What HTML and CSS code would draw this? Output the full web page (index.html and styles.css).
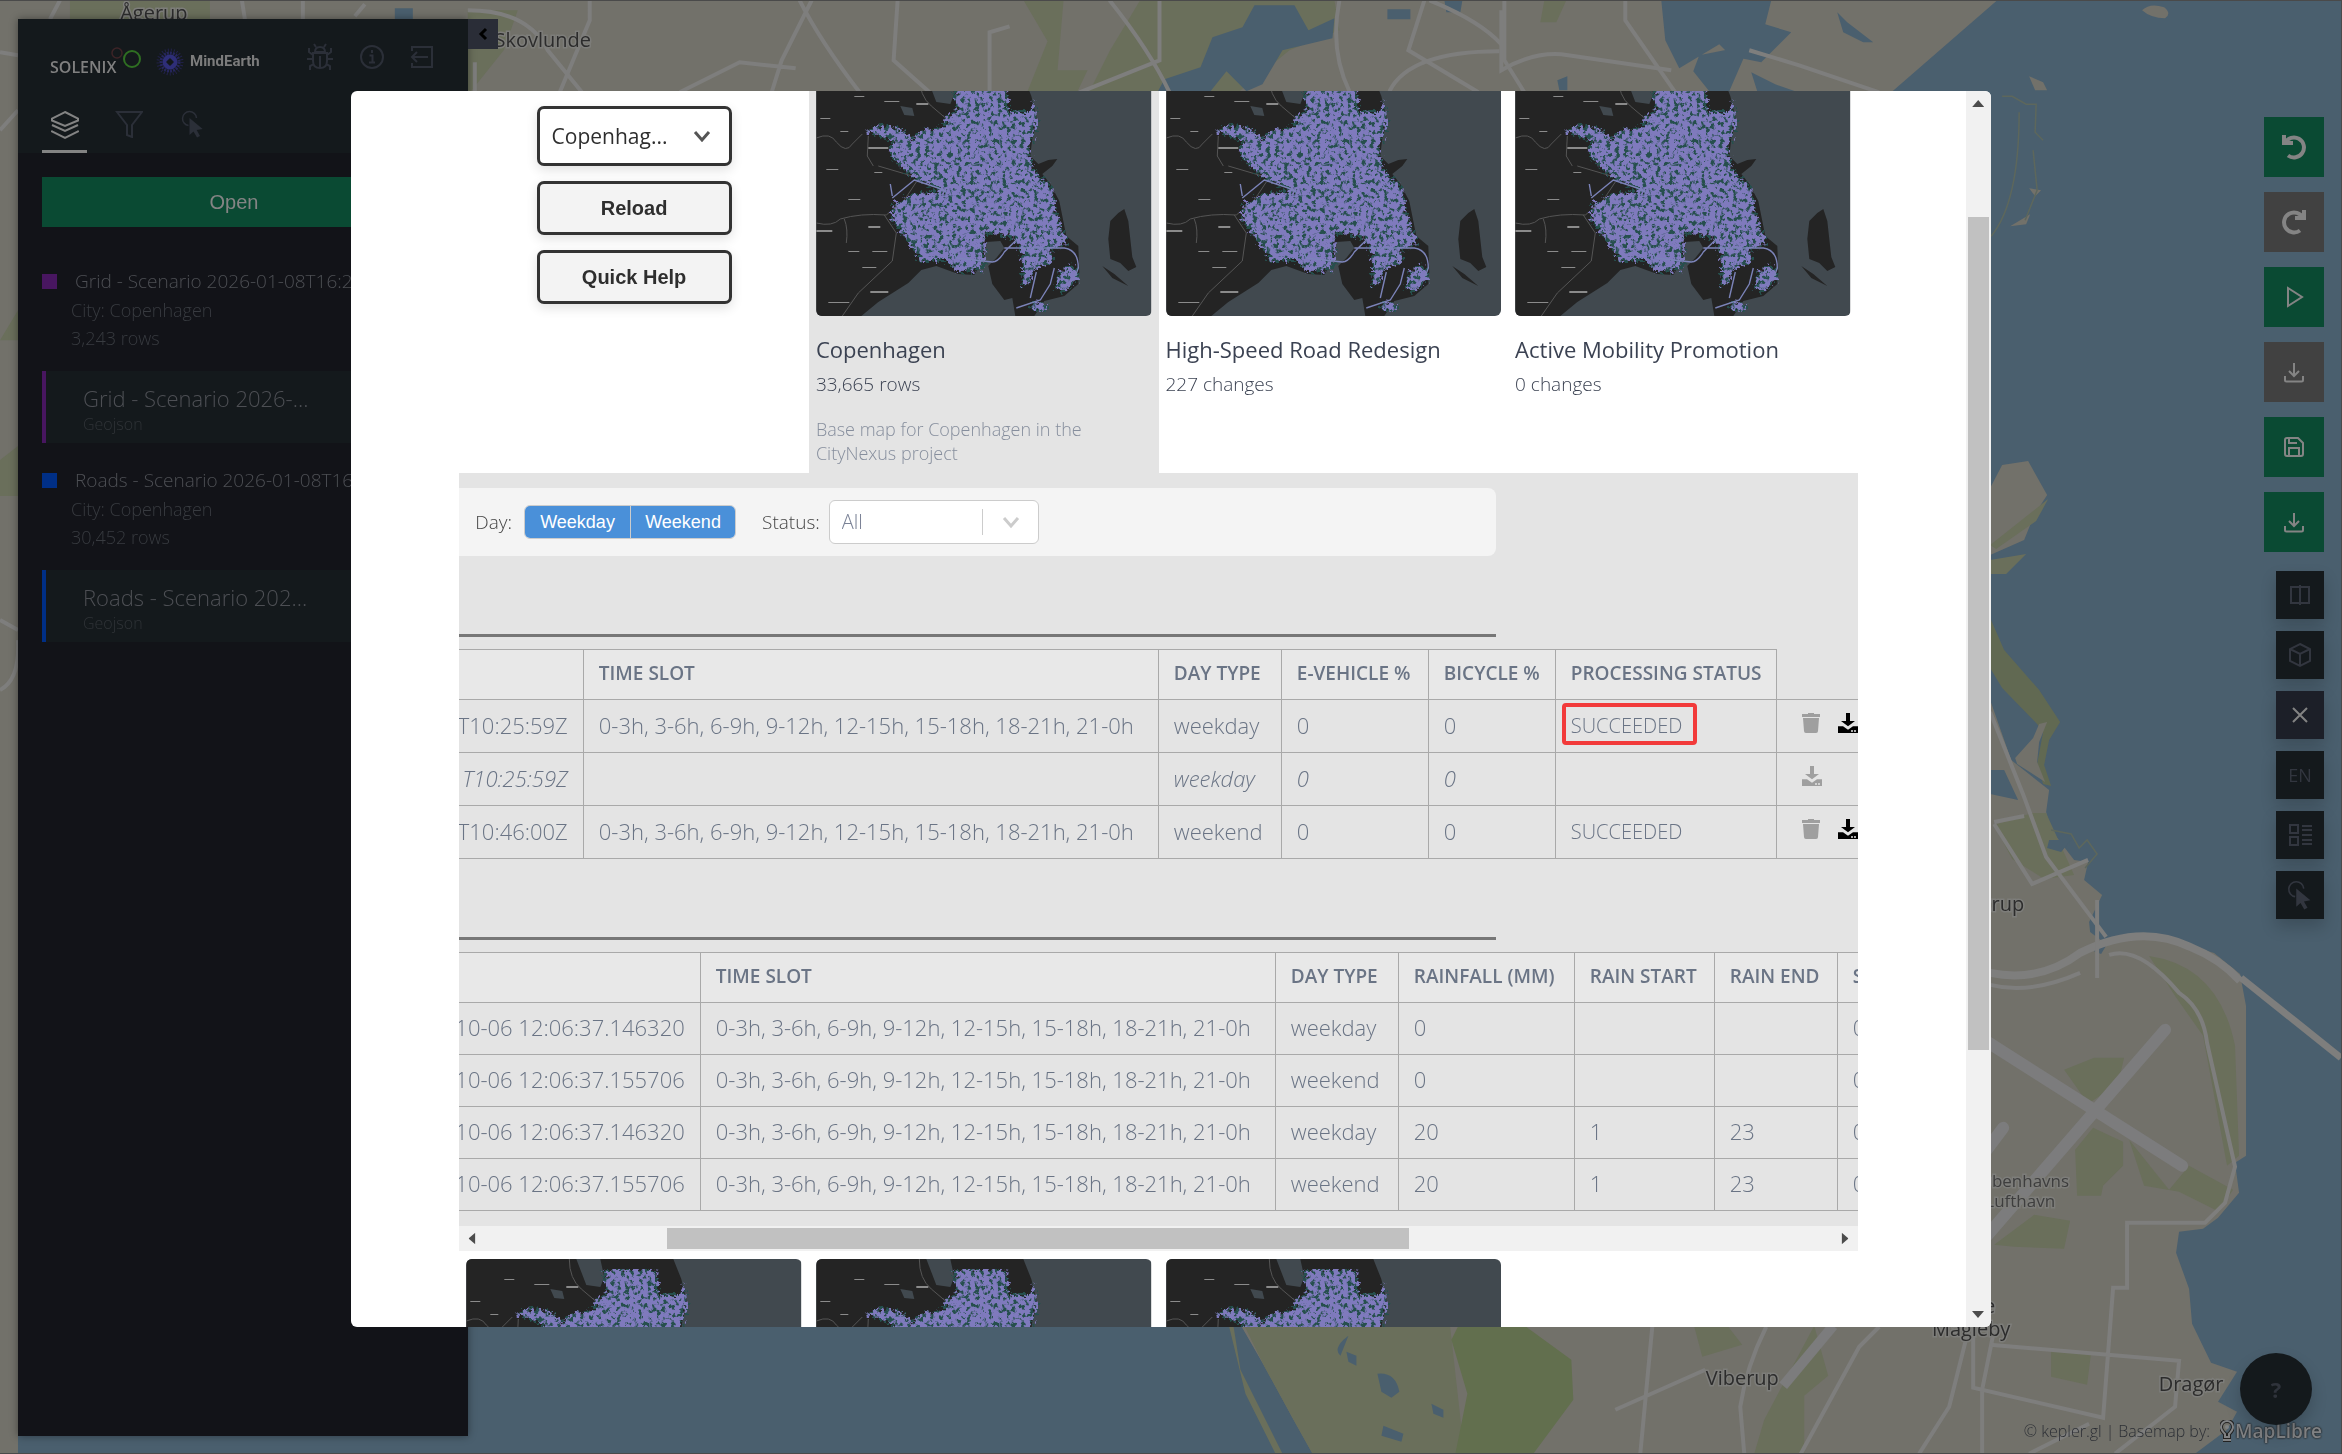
FILE: index.html
```html
<!DOCTYPE html>
<html lang="en">
<head>
<meta charset="utf-8">
<title>CityNexus</title>
<link rel="stylesheet" href="styles.css">
</head>
<body>
<svg class="defs" width="0" height="0" aria-hidden="true">
  <defs>
    <filter id="streets" x="0" y="0" width="1" height="1">
      <feTurbulence type="fractalNoise" baseFrequency="0.22" numOctaves="4" seed="4" result="n"/>
      <feColorMatrix in="n" type="matrix" values="0 0 0 0 0  0 0 0 0 0  0 0 0 0 0  0 0 0 7 -2.4" result="m"/>
      <feDisplacementMap in="SourceGraphic" in2="n" scale="14" xChannelSelector="R" yChannelSelector="G" result="d"/>
      <feComposite in="d" in2="m" operator="in"/>
    </filter>
    <filter id="rough" x="0" y="0" width="1" height="1">
      <feTurbulence type="fractalNoise" baseFrequency="0.3" numOctaves="2" seed="4" result="n"/>
      <feDisplacementMap in="SourceGraphic" in2="n" scale="16" xChannelSelector="R" yChannelSelector="G"/>
    </filter>
    <path id="town" d="M137 10H190L191 36 214 36 217 25 221 49 212 72 217 95 236 112 239 135 251 169 234 172 236 185 217 194 212 209 206 209 207 185 204 172 197 162 169 155 167 194 141 195 132 185 104 185 91 164 76 145 77 129 97 119 127 115 117 109 97 102 84 90 74 79 76 65 49 54 66 49 87 54 94 64 107 54 127 52 131 40 141 37z"/>
    <symbol id="city" viewBox="0 0 335 240">
      <rect width="335" height="240" fill="#41494f"/>
      <path fill="#242424" d="M0 0H207L215 20 221 45 216 62 214 80 222 88 232 84 241 83 236 90 226 98 234 108 243 125 246 140 250 160 262 170 263 195 262 208 248 220 228 225 218 240H199L196 222 188 224 176 208 172 190 180 182 188 172 184 165 170 166 168 182 158 199 142 198 120 190 105 194 92 207 62 226 45 240H0Z"/>
      <path fill="#242424" d="M308 133l4 12 4 36 4 10-8 4-8-8-10-4-2-20 2-18 8-8zM286 190l12 8 14 12-16-8z"/>
      <path fill="#41494f" d="M110 0h24l4 18-4 10-14-2zM84 30l12 2 2 8-10-1z"/>
      <g fill="none" stroke="#555" stroke-width="1">
        <path d="M103 0q0 20 12 30l26 22M0 62q14-6 20 4 10 12 16 2l10-10M52 60l-1 20 6 10M0 147q16 4 24-4 20-6 46-4l18-15 12-18M68 139l12 18-4 28-34 32-16 23M28 143q4 10 2 24M62 90l34 10"/>
      </g>
      <g fill="#27504d" filter="url(#rough)">
        <use href="#town"/>
        <path d="M245 194l14-4 4 14-16 12-8-4zM216 226l16 2-4 8-14-2z"/>
      </g>
      <g fill="#7f7abd" filter="url(#streets)">
        <use href="#town"/>
        <path d="M245 194l14-4 4 14-16 12-8-4zM220 226l12 2-4 8-12-2z"/>
      </g>
      <g fill="none" stroke="#7b79b8" stroke-width="1" opacity=".8">
        <path d="M140 60l12 50 20 20M160 40l24 60 30 14M150 90l50-10M130 130l50-4 30 10M146 150l24-60 8-50M180 20l6 80-10 40M200 50l-24 60-16 40M136 66l60 30M214 132l10 30M100 140l40 10"/>
      </g>
      <g fill="none" stroke="#7b83b8" stroke-width="1.400">
        <path d="M76 122l22-18 24 8 8 4M128 158l12 24 36 4q6 0 12-10l12-12M188 172h60q14 2 14 20l-3 8M200 232l24-8 10-16 4-16M214 222l6-26M74 108l2 12"/>
      </g>
      <g fill="#8b8b8b">
        <path d="M100 27h12v2h-12zM68 25h15v1h-15zM52 71h20v2h-20zM52 150h12v2h-12zM0 154h16v2h-16zM54 215h18v2h-18zM32 123h12v1h-12zM10 93h12v1h-12zM46 191h14v1h-14zM32 175h11v1h-11zM56 175h15v1h-15zM12 226h21v1h-21zM4 42h10v1h-10zM58 96h8v1h-8zM24 55h8v1h-8zM38 20h10v1h-10z"/>
      </g>
    </symbol>
    <symbol id="chevron" viewBox="0 0 20 20"><path d="M3 6l7 8 7-8" fill="none" stroke="currentColor" stroke-width="3"/></symbol>
    <symbol id="tray" viewBox="0 0 24 24"><path d="M3 16v4q0 1.500 1.500 1.500h15q1.500 0 1.500-1.500v-4M12 3v13M7 11l5 5 5-5" fill="none" stroke="currentColor" stroke-width="2"/></symbol>
    <symbol id="pointer" viewBox="0 0 24 28"><path d="M7.500 15.500A7 7 0 1 1 15.500 8" fill="none" stroke="currentColor" stroke-width="1.500"/><path d="M8.500 8v17l4-3.500 3.500 6 3-1.600-3.300-5.900 6-1z" fill="currentColor"/></symbol>
    <symbol id="drive" viewBox="0 0 20 30"><path d="M8 0h4v12h5l-7 8-7-8h5z" fill="currentColor"/><path d="M0 20h5l5 5 5-5h5v10H0z" fill="currentColor"/><path d="M13 26h2v2h-2zM16 26h2v2h-2z" fill="#e4e4e4"/></symbol>
    <symbol id="trash" viewBox="0 0 18 20"><path d="M6 0h6v1h6v3H0V1h6zM1 5h16l-1 13q0 2-2 2H4q-2 0-2-2z" fill="#9f9f9f"/></symbol>
  </defs>
</svg>

<svg class="basemap" viewBox="0 0 2342 1454" preserveAspectRatio="xMidYMid slice" aria-label="Base map">
  <rect width="2342" height="1454" fill="#4a5f6e"/>
  <path fill="#72716a" d="M0 0H1998L1891 93 1991 488 2003 465 2029 461 2048 495 2035 515 2025 540 1991 555V700L2012 760 2050 790 2047 812 2052 830 2075 860 2089 862 2085 880 2103 895 2090 922 2091 932 2107 944 2145 938 2177 941 2215 953 2241 974 2247 1006V1156L2236 1163 2240 1193 2219 1218 2204 1229 2180 1232 2177 1253 2190 1289 2193 1324 2212 1363 2238 1372 2219 1402 2238 1412 2228 1430 2196 1454H1313L1294 1420 1265 1367 1242 1327V1200H0Z"/>
  <path fill="#4a5f6e" d="M469 1100H1242V1327L1265 1367 1294 1420 1313 1454H0V1440H469Z"/>
  <path fill="#72716a" d="M0 0H18V1454H0z"/>
  <path fill="#6a6f5b" d="M1233 1320l8 50 42 84-7 0-30-60-18-74zM1242 1320H1450L1465 1454H1313L1294 1420 1265 1367z"/>
  <path fill="#626f4e" d="M1452 1340l10-20h55l55 40 2 40-40 54H1456l12-60z"/>
  <path fill="#6a6f5b" d="M1765 1420l50-94 14 50-24 20 0 58h-50zM1695 1327h34l14 18-40 12zM2052 1349l40 4-4 32-36-8zM1995 1245l40-30 36 6-6 28-50-2zM2150 956q70 10 86 90l4 110-12 10-24-130-28-40zM2065 1070l30-12 30 0-6 26-30 20zM2076 1150l18-22 30 14 0 24-20 20-2 10h-24zM2130 1140l40 50 20-24 44 24-14 22-40-20-35-6z"/>
  <path fill="#6a6f5b" d="M1995 825l38-12 14 0 28 62-30 4-32-20zM1991 545l58-46-12 22-40 28zM1991 560l36-6-20 20-16 0zM70 0h132l-30 19H70zM468 50h34l-40 45h-30zM190 0h20v19h-30zM0 460l18-14v50H0zM0 340l18-30v30z"/>
  <path fill="#6a6f5b" d="M468 10l50 0-14 40-36 45zM1024 0h40l-6 70 30 0-10 21h-50l20-50zM1160 0h175l5 30-50 20-50 41h-150l20-40 30-50zM1545 0h22l-10 22h-16z"/>
  <g fill="#4a5f6e">
    <path d="M1255 5h40l14 25 26-12-2 20-50 12-20 34-16 7-20-20-24 30-50 0 12-22 36-12 12-30 30-10zM1445 0h18l-2 12h-14zM1662 0h110l-6 24 26 8-30 30-30-6-12-12-40 24-14-28zM1700 55l50-10-20 46h-20l-16-20zM1838 12l10 10 26 20-10 0-20-10zM1752 72l24 12 20 7h-38zM1558 80l10-4v14h-8z"/>
    <path d="M1388 9h23v10h-23zM1344 1340q-10 10-3 16l8-20zM1347 1352l10 4v10l-8-4zM1378 1374q18-2 22 18l-8 6-10-6zM1432 1404l12 6v8l-10-4zM1384 1426l20 8-2 8-20-6z"/>
    <path d="M1991 770l14 0 14 30-28-6zM2050 840l22 0-10 12-14-4zM2098 942l10 2-6 10-10-4zM395 8h18v11h-18z"/>
  </g>
  <path fill="#72703f" opacity=".6" d="M1991 618l14 32 35 40 21 32-11 18-5 25 7 21-8-2-6-20 6-32-6-8-35-36-12-20-12-20z"/>
  <path fill="#72716a" d="M2143 10q8-8 22-3 8 6 1 11-14 0-23-8zM2030 76l14 6 4 8-12 0zM2030 188l12 2-6 6zM2011 226l20-12-4 10zM2040 724l8-2-8 20-2 20 8 20-28-18-2-6 18-20z"/>
  <g fill="none" stroke="#5d675c" stroke-width="1.500"><path d="M2003 96h10l14 8h10l-1 28 8 8M2020 112q0 90-28 124M2034 150l4 40-12 30M2052 830l20 4 8 14 8-8 10 14-12 14"/></g>
  <g fill="none" stroke="#7e7e7d" stroke-width="4">
    <path d="M60 0l-10 19M242 0l3 19M303 0v19M365 4l-10 12M0 52l18 3M0 130l18-20M468 10q60 0 80 40l44 54M590 0v20l-30 72M800 0q20 40 60 92M812 0l-30 60-10 32M898 0l-4 60 36 32M1110 0q40 50 60 92M1160 0v60l-80 32M1340 0q-10 50 10 91M1425 0l-16 50 70 42M1505 0v60l20 32M1626 0v20l50 72M680 92l60-30 56 6M990 92v-60l20-6M1390 91q20-40 110-40M1430 0q50 20 72 44"/>
    <path d="M1502 10v60q30-18 60-16l110 16M1750 50l50 15 80 27M475 92v-30M0 690q20-10 18-50M0 620l18 10M1991 712l34 85 22 60 60 80M1995 822l30-6M1995 824l38 60 56-24M2030 1454l60-30M1995 1330l-12 60 0 70"/>
    <path d="M1991 973q50 10 90-20 60-30 110-6 30 12 50 34" stroke-width="8"/>
    <path d="M1991 985q40 10 90-12M2098 900l0 78M2110 955q30-10 70 38 24 16 28 50l28 124-10 36-20 20h-78v65h-14l-10 130-130-30 0-80M1991 1345l189 16-4 46-60 47M1880 1327l-20 20-60 110M1616 1410l90-40M1653 1327l-12 127M1767 1327q-20 40-26 80l4 47M1970 1327l-20 80-30 47"/>
    <path d="M2242 978l100 80" stroke-width="7"/>
  </g>
  <g fill="none" stroke="#7c7c7d" stroke-width="12" stroke-linecap="round"><path d="M1985 1040l198 126M2166 1030l-180 208M2004 1128l-18 24"/></g>
  <path stroke="#7c7c7d" stroke-width="10" d="M1834 1326l-50 60"/>
  <g class="place">
    <text x="154" y="20" text-anchor="middle">Ågerup</text>
    <text x="543" y="47" text-anchor="middle">Skovlunde</text>
    <text x="2025" y="911" text-anchor="end">Kastrup</text>
    <text x="1996" y="1313" text-anchor="end">Store</text>
    <text x="1972" y="1336" text-anchor="middle">Magleby</text>
    <text x="1743" y="1385" text-anchor="middle">Viberup</text>
    <text x="2192" y="1391" text-anchor="middle">Dragør</text>
  </g>
  <g class="place small">
    <text x="2070" y="1187" text-anchor="end">Københavns</text>
    <text x="2056" y="1207" text-anchor="end">Lufthavn</text>
  </g>
</svg>

<footer class="attribution">
  <a href="#">© kepler.gl</a><span>|</span><span>Basemap by:</span>
  <a class="maplibre" href="#"><svg width="14" height="22" viewBox="0 0 14 22"><path d="M7 1a6 6 0 0 0-6 6q0 3 4 7v3h4v-3q4-4 4-7a6 6 0 0 0-6-6zM3 20h8" fill="none" stroke="#222" stroke-width="4"/><path d="M7 1a6 6 0 0 0-6 6q0 3 4 7v3h4v-3q4-4 4-7a6 6 0 0 0-6-6zM3 20h8" fill="none" stroke="currentColor" stroke-width="2"/><circle cx="7" cy="7" r="2" fill="currentColor"/></svg>MapLibre</a>
</footer>

<aside class="sidebar">
  <header class="side-head">
    <div class="brand">
      <svg class="solenix" width="94" height="40" viewBox="0 0 94 40"><text x="0" y="32">SOLENIX</text><circle cx="67" cy="12" r="5" fill="none" stroke="#3d2427" stroke-width="1.500"/><circle cx="82" cy="18" r="8" fill="none" stroke="#2f6f22" stroke-width="2"/></svg>
      <svg width="28" height="28" viewBox="0 0 28 28"><circle cx="14" cy="14" r="12" fill="none" stroke="#22224a" stroke-width="3" stroke-dasharray="1 2"/><circle cx="14" cy="14" r="9" fill="none" stroke="#26265c" stroke-width="3" stroke-dasharray="2 1"/><circle cx="14" cy="14" r="5" fill="none" stroke="#2e2e78" stroke-width="5"/><path d="M14 10l4 4-4 4-4-4z" fill="#14191c"/></svg>
      <span class="mind">MindEarth</span>
      <nav class="actions">
        <a href="#" aria-label="Report a bug"><svg width="28" height="28" viewBox="0 0 28 28" fill="none" stroke="currentColor" stroke-width="2"><path d="M9 9q0-5 5-5t5 5zM7 10h14v8q0 7-7 7t-7-7zM14 13v12M7 16H1M21 16h6M7 12L3 9V5M21 12l4-3V5M8 21l-4 2v4M20 21l4 2v4M10 4L8 1M18 4l2-3"/></svg></a>
        <a href="#" aria-label="About"><svg width="24" height="24" viewBox="0 0 24 24" fill="none" stroke="currentColor" stroke-width="2"><circle cx="12" cy="12" r="11"/><path d="M12 5v3M9.500 10.500H12.500V17M9 17.500h6"/></svg></a>
        <a href="#" aria-label="Log out"><svg width="24" height="24" viewBox="0 0 24 24" fill="none" stroke="currentColor" stroke-width="2"><path d="M2 6V2h20v20H2v-4M18 12H3M7 7l-5 5 5 5"/></svg></a>
      </nav>
    </div>
    <nav class="tabs">
      <a class="tab active" href="#" aria-label="Layers"><svg width="30" height="30" viewBox="0 0 30 30" fill="none" stroke="currentColor" stroke-width="2"><path d="M15 2l13 6.500v2L15 16 2 10.500v-2zM2 15l13 6 13-6M2 20.500v1L15 28l13-6.500v-1"/></svg></a>
      <a class="tab" href="#" aria-label="Filters"><svg width="28" height="28" viewBox="0 0 28 28" fill="none" stroke="currentColor" stroke-width="2"><path d="M2 2h25L17 15v12l-5-2V15z"/></svg></a>
      <a class="tab" href="#" aria-label="Interactions"><svg width="24" height="28"><use href="#pointer"/></svg></a>
    </nav>
  </header>
  <div class="side-body">
    <button class="open" type="button">Open</button>
    <section class="dataset">
      <h3><i class="swatch purple"></i>Grid - Scenario 2026-01-08T16:22</h3>
      <p>City: Copenhagen</p>
      <p>3,243 rows</p>
      <div class="layer purple-edge"><strong>Grid - Scenario 2026-...</strong><small>Geojson</small></div>
    </section>
    <section class="dataset">
      <h3><i class="swatch blue"></i>Roads - Scenario 2026-01-08T16:22</h3>
      <p>City: Copenhagen</p>
      <p>30,452 rows</p>
      <div class="layer blue-edge"><strong>Roads - Scenario 202...</strong><small>Geojson</small></div>
    </section>
  </div>
  <button class="collapse" type="button" aria-label="Collapse"><svg width="12" height="14" viewBox="0 0 12 14"><path d="M9 2L4 7l5 5" fill="none" stroke="#000" stroke-width="3"/></svg></button>
</aside>

<div class="tools">
  <button class="tool go" type="button" aria-label="Undo"><svg width="26" height="26" viewBox="0 0 26 26"><path d="M4 9A10 10 0 1 1 7 21.500" fill="none" stroke="currentColor" stroke-width="4"/><path d="M1 1h4v6h7v4H1z" fill="currentColor"/></svg></button>
  <button class="tool off" type="button" aria-label="Redo"><svg width="26" height="26" viewBox="0 0 26 26"><path d="M22 9A10 10 0 1 0 19 21.500" fill="none" stroke="currentColor" stroke-width="4"/><path d="M25 1h-4v6h-7v4h11z" fill="currentColor"/></svg></button>
  <button class="tool go" type="button" aria-label="Run"><svg width="24" height="24" viewBox="0 0 24 24"><path d="M6 3v18l14-9z" fill="none" stroke="currentColor" stroke-width="2"/></svg></button>
  <button class="tool off" type="button" aria-label="Import"><svg width="24" height="24"><use href="#tray"/></svg></button>
  <button class="tool go" type="button" aria-label="Save"><svg width="24" height="24" viewBox="0 0 24 24"><path d="M3 5q0-2 2-2h11l5 5v11q0 2-2 2H5q-2 0-2-2zM7 21v-8h10v8M7 3v5h8" fill="none" stroke="currentColor" stroke-width="2"/></svg></button>
  <button class="tool go" type="button" aria-label="Download"><svg width="24" height="24"><use href="#tray"/></svg></button>
  <div class="controls">
    <button class="ctl" type="button" aria-label="Split map"><svg width="22" height="22" viewBox="0 0 22 22"><path d="M2 3h18v16H2zM11 1v20" fill="none" stroke="currentColor" stroke-width="2"/></svg></button>
    <button class="ctl" type="button" aria-label="3D map"><svg width="24" height="26" viewBox="0 0 24 26"><path d="M12 2l10 5v12l-10 5-10-5V7zM2 7l10 5 10-5M12 12v12" fill="none" stroke="currentColor" stroke-width="2"/></svg></button>
    <button class="ctl lit" type="button" aria-label="Close"><svg width="18" height="18" viewBox="0 0 18 18"><path d="M2 2l14 14M16 2L2 16" fill="none" stroke="currentColor" stroke-width="2"/></svg></button>
    <button class="ctl" type="button">EN</button>
    <button class="ctl" type="button" aria-label="Legend"><svg width="24" height="24" viewBox="0 0 24 24"><path d="M2 2h8v8H2zM2 14h8v8H2zM14 3h10M14 7h10M14 12h10M14 17h10M14 21h10" fill="none" stroke="currentColor" stroke-width="2"/></svg></button>
    <button class="ctl" type="button" aria-label="Select"><svg width="26" height="30"><use href="#pointer"/></svg></button>
  </div>
</div>
<button class="help" type="button">?</button>

<main class="modal">
  <div class="modal-view">
    <div class="gallery">
      <form class="picker">
        <label class="city-select"><select aria-label="City"><option>Copenhag...</option></select><svg width="20" height="20"><use href="#chevron"/></svg></label>
        <button type="button">Reload</button>
        <button type="button">Quick Help</button>
      </form>
      <article class="card chosen">
        <svg class="thumb"><use href="#city"/></svg>
        <h2>Copenhagen</h2><p>33,665 rows</p>
        <p class="desc">Base map for Copenhagen in the CityNexus project</p>
      </article>
      <article class="card"><svg class="thumb"><use href="#city"/></svg><h2>High-Speed Road Redesign</h2><p>227 changes</p></article>
      <article class="card"><svg class="thumb"><use href="#city"/></svg><h2>Active Mobility Promotion</h2><p>0 changes</p></article>
    </div>

    <section class="results">
      <div class="results-view">
        <form class="filters">
          <span>Day:</span>
          <div class="days"><button type="button">Weekday</button><button type="button">Weekend</button></div>
          <label for="status">Status:</label>
          <div class="status"><select id="status"><option>All</option></select><svg width="20" height="20"><use href="#chevron"/></svg></div>
        </form>
        <hr>
        <table class="runs">
          <colgroup><col class="c-id"><col class="c-slot"><col class="c-day"><col class="c-ev"><col class="c-bike"><col class="c-stat"><col class="c-act"></colgroup>
          <thead><tr><th></th><th>TIME SLOT</th><th>DAY TYPE</th><th>E-VEHICLE %</th><th>BICYCLE %</th><th>PROCESSING STATUS</th><td class="blank"></td></tr></thead>
          <tbody>
            <tr><td><div class="stamp">T10:25:59Z</div></td><td>0-3h, 3-6h, 6-9h, 9-12h, 12-15h, 15-18h, 18-21h, 21-0h</td><td>weekday</td><td>0</td><td>0</td><td class="state marked">SUCCEEDED</td><td><div class="acts"><svg width="18" height="20"><use href="#trash"/></svg><svg class="strong" width="20" height="20" viewBox="0 0 20 30" preserveAspectRatio="none"><use href="#drive" width="20" height="30"/></svg></div></td></tr>
            <tr class="derived"><td><div class="stamp">T10:25:59Z</div></td><td></td><td>weekday</td><td>0</td><td>0</td><td></td><td><div class="acts"><svg width="20" height="20" viewBox="0 0 20 30" preserveAspectRatio="none"><use href="#drive" width="20" height="30"/></svg></div></td></tr>
            <tr><td><div class="stamp">T10:46:00Z</div></td><td>0-3h, 3-6h, 6-9h, 9-12h, 12-15h, 15-18h, 18-21h, 21-0h</td><td>weekend</td><td>0</td><td>0</td><td class="state">SUCCEEDED</td><td><div class="acts"><svg width="18" height="20"><use href="#trash"/></svg><svg class="strong" width="20" height="20" viewBox="0 0 20 30" preserveAspectRatio="none"><use href="#drive" width="20" height="30"/></svg></div></td></tr>
          </tbody>
        </table>
        <hr>
        <table class="rain">
          <colgroup><col class="c-rid"><col class="c-slot"><col class="c-day"><col class="c-mm"><col class="c-start"><col class="c-end"><col class="c-act"></colgroup>
          <thead><tr><th></th><th>TIME SLOT</th><th>DAY TYPE</th><th>RAINFALL (MM)</th><th>RAIN START</th><th>RAIN END</th><th>S</th></tr></thead>
          <tbody>
            <tr><td><div class="stamp">10-06 12:06:37.146320</div></td><td>0-3h, 3-6h, 6-9h, 9-12h, 12-15h, 15-18h, 18-21h, 21-0h</td><td>weekday</td><td>0</td><td></td><td></td><td>0</td></tr>
            <tr><td><div class="stamp">10-06 12:06:37.155706</div></td><td>0-3h, 3-6h, 6-9h, 9-12h, 12-15h, 15-18h, 18-21h, 21-0h</td><td>weekend</td><td>0</td><td></td><td></td><td>0</td></tr>
            <tr><td><div class="stamp">10-06 12:06:37.146320</div></td><td>0-3h, 3-6h, 6-9h, 9-12h, 12-15h, 15-18h, 18-21h, 21-0h</td><td>weekday</td><td>20</td><td>1</td><td>23</td><td>0</td></tr>
            <tr><td><div class="stamp">10-06 12:06:37.155706</div></td><td>0-3h, 3-6h, 6-9h, 9-12h, 12-15h, 15-18h, 18-21h, 21-0h</td><td>weekend</td><td>20</td><td>1</td><td>23</td><td>0</td></tr>
          </tbody>
        </table>
      </div>
      <div class="hbar"><i class="arrow left"></i><div class="track"><b class="thumb-bar"></b></div><i class="arrow right"></i></div>
    </section>

    <div class="gallery lower">
      <article class="card"><svg class="thumb"><use href="#city"/></svg></article>
      <article class="card"><svg class="thumb"><use href="#city"/></svg></article>
      <article class="card"><svg class="thumb"><use href="#city"/></svg></article>
    </div>
  </div>
  <div class="vbar"><i class="arrow up"></i><div class="track"><b class="thumb-bar"></b></div><i class="arrow down"></i></div>
</main>
</body>
</html>
```
FILE: styles.css
```css
* { box-sizing: border-box; }
html, body { height: 100%; }
body {
  margin: 0;
  overflow: hidden;
  background: #4a5f6e;
  color: #3b4252;
  font-family: "Open Sans", "Noto Sans", sans-serif;
  font-weight: 300;
}
h2, h3, p { margin: 0; font-weight: inherit; }
a { color: inherit; text-decoration: none; }
button, select { font-family: "Liberation Sans", Arial, sans-serif; border: 0; padding: 0; margin: 0; }
svg { display: block; flex: none; }
.defs { position: absolute; }

/* Map behind everything */
.basemap { position: fixed; inset: 0; width: 100%; height: 100%; border: solid #4a4a4a; border-width: 1px 1px 1px 0; }
.place { font-size: 20px; font-weight: 400; fill: #2c2c2c; stroke: #7d7d7a; stroke-width: 3px; paint-order: stroke; }
.place.small { font-size: 17px; fill: #3e3e3e; }
.attribution {
  position: fixed; right: 20px; bottom: 11px;
  display: flex; align-items: center; gap: 4px;
  font-size: 16px; line-height: 24px; color: #2c2f35;
}
.maplibre { display: flex; align-items: center; gap: 1px; font-size: 19px; font-weight: 600; color: #808284; text-shadow: 0 0 2px #222, 0 0 2px #222; margin-left: 6px; }

/* Side panel */
.sidebar { position: fixed; left: 18px; top: 19px; bottom: 18px; width: 450px; background: #121318; box-shadow: 0 0 8px rgba(0, 0, 0, .4); }
.side-head { height: 134px; background: #14191c; padding: 24px 34px 0 32px; }
.brand { display: flex; align-items: center; height: 36px; }
.solenix text { font: 600 16px "Open Sans", sans-serif; fill: #808080; }
.brand > svg + svg { margin: 2px 6px 0 12px; }
.mind { font: 700 15px/20px Roboto, sans-serif; color: #7c7c7c; }
.actions { margin: -8px 0 0 auto; display: flex; align-items: center; gap: 26px; color: #2b2f38; height: 28px; }
.tabs { display: flex; gap: 19px; margin: 22px 0 0 -8px; color: #2b2f38; }
.tab { width: 45px; height: 52px; padding-top: 9px; display: flex; flex-direction: column; align-items: center; }
.tab.active { color: #838383; border-bottom: 3px solid #838383; }
.side-body { padding: 24px 24px 0; color: #383b40; }
.open { display: block; width: 100%; height: 50px; padding-right: 18px; background: #0a4a33; color: #848484; font-size: 20px; margin-bottom: 39px; }
.dataset { font-size: 18px; line-height: 28px; margin-bottom: 22px; }
.dataset h3 { display: flex; align-items: center; gap: 18px; height: 30px; font-size: 19px; color: #4d4f54; white-space: nowrap; overflow: hidden; }
.dataset p { padding-left: 29px; }
.swatch { width: 15px; height: 15px; }
.purple { background: #481660; }
.blue { background: #002f86; }
.layer { margin-top: 19px; height: 72px; padding: 12px 0 0 37px; border-left: 4px solid; background: #14191c; }
.layer.purple-edge { border-color: #481660; }
.layer.blue-edge { border-color: #002f86; }
.layer strong { display: block; font-weight: 300; font-size: 22px; line-height: 30px; color: #4d4f54; }
.layer small { display: block; font-size: 16px; line-height: 22px; color: #2f3337; }
.collapse { position: absolute; left: 100%; top: 0; width: 30px; height: 30px; background: #2a2d37; display: grid; place-items: center; }

/* Map tools */
.tools { position: fixed; top: 117px; right: 18px; display: flex; flex-direction: column; gap: 15px; align-items: flex-end; }
.tool { width: 60px; height: 60px; display: grid; place-items: center; color: #848484; }
.go { background: #0a4a33; }
.off { background: #414141; }
.controls { display: flex; flex-direction: column; gap: 12px; margin-top: 4px; }
.ctl { width: 48px; height: 48px; display: grid; place-items: center; background: #14191c; color: #32363f; font: 400 18px "Open Sans", sans-serif; box-shadow: 0 8px 16px rgba(0, 0, 0, .18); }
.ctl.lit { background: #1c1f28; color: #838383; }
.help { position: fixed; right: 30px; bottom: 29px; width: 72px; height: 72px; border-radius: 50%; background: #14191c; color: #2f333b; font: 700 22px "Open Sans", sans-serif; box-shadow: 0 8px 16px rgba(0, 0, 0, .18); }

/* Dialog */
.modal { position: fixed; left: 15%; right: 15%; top: 91px; bottom: 127px; display: flex; background: #fff; border-radius: 6px; overflow: hidden; }
.modal-view { flex: 1; min-width: 0; padding: 0 108px; overflow: hidden; }
.gallery { display: grid; grid-template-columns: repeat(4, 1fr); margin-top: -23px; }
.gallery.lower { margin-top: 0; }
.card { padding: 8px 7px; }
.chosen { background: #e4e4e4; }
.thumb { width: 100%; height: 240px; border-radius: 6px; }
.card h2 { margin-top: 18px; font-size: 22px; line-height: 30px; font-weight: 400; }
.card p { margin-top: 7px; font-size: 19px; line-height: 26px; }
.card .desc { margin-top: 20px; font-size: 18px; line-height: 24px; color: #868e9d; }
.picker { padding-top: 38px; display: flex; flex-direction: column; align-items: center; gap: 15px; }
.picker button, .city-select { width: 195px; height: 54px; border: 3px solid #333; border-radius: 7px; background: #f3f3f3; color: #2e2e2e; box-shadow: 0 4px 12px rgba(0, 0, 0, .12); }
.picker button { font-size: 20px; font-weight: 700; }
.city-select { height: 60px; background: #fff; display: flex; align-items: center; padding: 0 17px 0 12px; color: #555; }
select { appearance: none; background: transparent; outline: 0; }
.city-select select { flex: 1; min-width: 0; font: 400 21px "Open Sans", sans-serif; color: #2e2e2e; }

/* Results panel */
.results { background: #e4e4e4; }
.results-view { overflow: hidden; padding: 15px 0 15px; }
.filters { width: calc(100% - 362px); height: 68px; display: flex; align-items: center; padding-left: 16px; background: #f4f4f4; border-radius: 0 8px 8px 0; font-size: 19px; color: #444; }
.days { display: flex; margin: 0 26px 0 12px; border: 1px solid #ccc; border-radius: 6px; overflow: hidden; }
.days button { width: 105px; height: 32px; background: #4a90d9; color: #fff; font-size: 18px; }
.days button + button { border-left: 1px solid #ccc; }
.status { display: flex; align-items: center; width: 210px; height: 44px; margin-left: 9px; padding-right: 17px; border: 1px solid #ccc; border-radius: 6px; background: #fff; color: #ccc; }
.status select { flex: 1; height: 26px; padding-left: 12px; margin-right: 18px; border-right: 1px solid #ccc; font: 300 20px/24px "Open Sans", sans-serif; color: #7a8296; }
hr { width: calc(100% - 362px); height: 3px; margin: 78px 0 12px; border: 0; background: #777; }
table { width: 100%; table-layout: fixed; border-collapse: collapse; font-size: 22px; color: #6a7485; white-space: nowrap; }
th, td { border: 1px solid #a9a9a9; padding: 0 15px; text-align: left; overflow: hidden; }
td { padding-bottom: 3px; }
th:first-child, td:first-child { border-left: 0; }
tr > :last-child { border-right: 0; }
th { height: 50px; padding-bottom: 3px; font-size: 19px; font-weight: 600; background: #e8e8e8; }
.blank { border-top: 0; }
.runs tbody td { height: 53px; }
.rain tbody td { height: 52px; }
.stamp, .acts { display: flex; justify-content: flex-end; }
.acts { justify-content: flex-start; gap: 18px; padding: 0 0 4px 10px; color: #9f9f9f; }
.strong { color: #000; }
.derived { font-style: italic; }
.state { font-size: 20px; padding-bottom: 1px; }
.marked { position: relative; overflow: visible; }
.marked::after { content: ""; box-sizing: border-box; position: absolute; left: 6px; top: 3px; width: 135px; height: 42px; border: 4px solid #f23a3a; border-radius: 4px; }
.c-id { width: 124px; }
.c-rid { width: 241px; }
.c-slot { width: 575px; }
.c-day { width: 123px; }
.c-ev { width: 147px; }
.c-bike { width: 127px; }
.c-stat { width: 221px; }
.c-mm { width: 176px; }
.c-start { width: 140px; }
.c-end { width: 123px; }

/* Scroll bars */
.hbar, .vbar { display: flex; background: #f1f1f1; }
.hbar { height: 25px; }
.vbar { flex-direction: column; width: 25px; }
.arrow { width: 25px; height: 25px; flex: none; display: grid; place-items: center; }
.arrow::before { content: ""; width: 12px; height: 7px; background: #4c4c4c; clip-path: polygon(50% 0, 100% 100%, 0 100%); }
.down::before { transform: rotate(180deg); }
.left::before { transform: rotate(-90deg); }
.right::before { transform: rotate(90deg); }
.track { flex: 1; display: flex; }
.vbar .track { flex-direction: column; }
.track::before, .track::after { content: ""; }
.thumb-bar { background: #c1c1c1; }
.hbar .thumb-bar { flex: 742; margin: 2px 0; }
.hbar .track::before { flex: 183; }
.hbar .track::after { flex: 424; }
.vbar .thumb-bar { flex: 833; margin: 0 2px; }
.vbar .track::before { flex: 101; }
.vbar .track::after { flex: 252; }
```
